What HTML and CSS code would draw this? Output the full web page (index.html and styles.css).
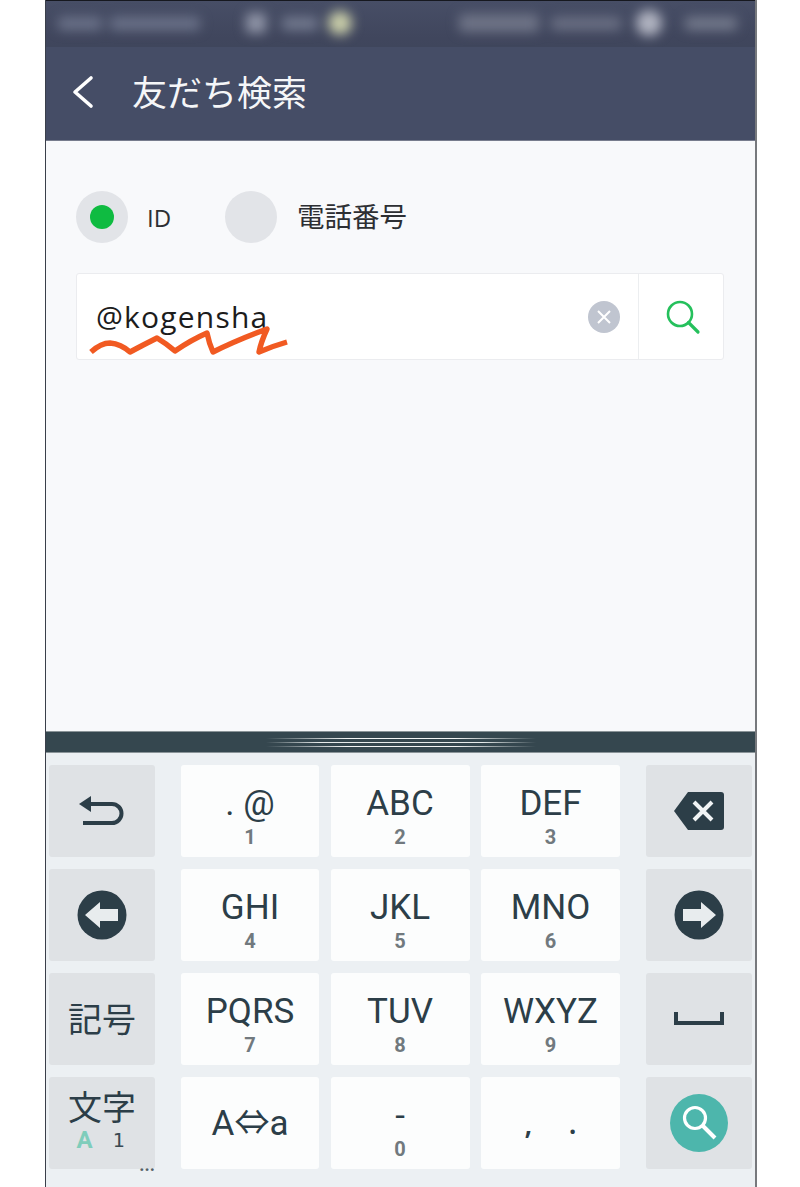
FILE: index.html
```html
<!DOCTYPE html>
<html lang="ja">
<head>
<meta charset="utf-8">
<title>友だち検索</title>
<link rel="stylesheet" href="styles.css">
</head>
<body>
<div class="phone">
  <div class="status">
    <div class="status-clip">
      <span class="b b1"></span><span class="b b2"></span><span class="b b3"></span><span class="b b4"></span><span class="b b5"></span>
      <span class="spacer"></span>
      <span class="b b6"></span><span class="b b7"></span><span class="b b8"></span><span class="b b9"></span>
    </div>
  </div>
  <header class="header">
    <svg class="back" width="24" height="34" viewBox="0 0 24 34"><path d="M20 3 L4 17 L20 31" fill="none" stroke="#fff" stroke-width="3.6" stroke-linecap="round" stroke-linejoin="round"/></svg>
    <h1 class="title">友だち検索</h1>
  </header>
  <main class="body">
    <div class="radios">
      <div class="radio"><span class="dot on"></span><span class="radio-label id">ID</span></div>
      <div class="radio"><span class="dot"></span><span class="radio-label">電話番号</span></div>
    </div>
    <div class="field">
      <span class="field-text">@kogensha</span>
      <svg class="clear" width="32" height="32" viewBox="0 0 32 32"><circle cx="16" cy="16" r="16" fill="#c0c5d0"/><path d="M10 10 L22 22 M22 10 L10 22" stroke="#fff" stroke-width="2"/></svg>
      <div class="field-btn">
        <svg width="36" height="36" viewBox="0 0 36 36"><circle cx="15" cy="15" r="12" fill="none" stroke="#25c05c" stroke-width="2.6"/><path d="M23.5 23.5 L33 33" stroke="#25c05c" stroke-width="3.2" stroke-linecap="round"/></svg>
      </div>
      <svg class="squiggle" width="210" height="40" viewBox="0 0 210 40"><path d="M14 34 Q24 25 33 25 Q44 26 53 34 Q66 27 80 20 Q90 26 98 33 Q114 22 130 15 Q132 25 136 34 Q160 22 190 11 Q184 24 182 34 Q196 28 210 24" fill="none" stroke="#f15a22" stroke-width="5.4" stroke-linejoin="round"/></svg>
    </div>
  </main>
  <div class="handle"><span class="lines"></span></div>
  <section class="keyboard">
    <div class="side">
      <div class="key fn"><svg width="46" height="34" viewBox="0 0 46 34"><path d="M6 10 H33 A9.500 9.500 0 0 1 33 29 H4" fill="none" stroke="#2c3e48" stroke-width="4"/><path d="M0 10 L12 2 V18 Z" fill="#2c3e48"/></svg></div>
      <div class="key fn"><svg width="50" height="50" viewBox="0 0 50 50"><circle cx="25" cy="25" r="24.500" fill="#2c3e48"/><path d="M8 25 L23 12 V19 H41 V31 H23 V38 Z" fill="#e8ecee"/></svg></div>
      <div class="key fn jp">記号</div>
      <div class="key fn mode">
        <span class="mode-main">文字</span>
        <span class="mode-sub"><b>A</b><i>1</i></span>
        <span class="more">...</span>
      </div>
    </div>
    <div class="grid">
      <div class="key"><span class="main sym">. @</span><span class="num">1</span></div>
      <div class="key"><span class="main">ABC</span><span class="num">2</span></div>
      <div class="key"><span class="main">DEF</span><span class="num">3</span></div>
      <div class="key"><span class="main">GHI</span><span class="num">4</span></div>
      <div class="key"><span class="main">JKL</span><span class="num">5</span></div>
      <div class="key"><span class="main">MNO</span><span class="num">6</span></div>
      <div class="key"><span class="main">PQRS</span><span class="num">7</span></div>
      <div class="key"><span class="main">TUV</span><span class="num">8</span></div>
      <div class="key"><span class="main">WXYZ</span><span class="num">9</span></div>
      <div class="key"><span class="main case">A⇔a</span></div>
      <div class="key"><span class="main">-</span><span class="num">0</span></div>
      <div class="key"><span class="main punct">,&nbsp;&nbsp;&nbsp;&nbsp;&nbsp;.</span></div>
    </div>
    <div class="side">
      <div class="key fn"><svg width="50" height="38" viewBox="0 0 50 38"><path d="M14 0 H47 Q50 0 50 3 V35 Q50 38 47 38 H14 L0 19 Z" fill="#2c3e48"/><path d="M20 10 L38 28 M38 10 L20 28" stroke="#f1f4f5" stroke-width="4"/></svg></div>
      <div class="key fn"><svg width="50" height="50" viewBox="0 0 50 50"><circle cx="25" cy="25" r="24.500" fill="#2c3e48"/><path d="M42 25 L27 12 V19 H9 V31 H27 V38 Z" fill="#e8ecee"/></svg></div>
      <div class="key fn"><svg width="50" height="14" viewBox="0 0 50 14"><path d="M2 0 V11 H48 V0" fill="none" stroke="#2c3e48" stroke-width="4"/></svg></div>
      <div class="key fn"><svg width="58" height="58" viewBox="0 0 58 58"><circle cx="29" cy="29" r="29" fill="#4db6ac"/><circle cx="25" cy="24" r="10.500" fill="none" stroke="#fff" stroke-width="3.200"/><path d="M33 32 L45 44" stroke="#fff" stroke-width="4"/></svg></div>
    </div>
  </section>
</div>
</body>
</html>
```
FILE: styles.css
```css
html, body { margin: 0; padding: 0; background: #fff; }
body { width: 800px; height: 1187px; overflow: hidden; font-family: "Noto Sans", "Noto Sans CJK JP", sans-serif; }

.phone {
  margin-left: 45px;
  width: 712px;
  height: 1187px;
  box-sizing: border-box;
  border-left: 1px solid #3a3f4a;
  border-right: 2px solid #77797d;
  display: flex;
  flex-direction: column;
  background: #f8f9fb;
}

.status { height: 47px; background: linear-gradient(#474e66, #40465d 80%, #3f465c); border-top: 1px solid #16181f; box-sizing: border-box; overflow: hidden; }
.status-clip { display: flex; align-items: center; height: 44px; padding: 0 18px 0 12px; filter: blur(6px); }
.spacer { flex: 1; }
.b { display: block; height: 13px; margin-right: 8px; background: #7a8094; border-radius: 4px; }
.b1 { width: 44px; background: #6b7289; }
.b2 { width: 90px; margin-right: 46px; background: #6b7289; }
.b3 { width: 20px; height: 20px; background: #8f94a6; }
.b4 { width: 36px; background: #737a8f; margin-left: 8px; }
.b5 { width: 24px; height: 24px; background: #c8cca8; border-radius: 50%; margin-left: 2px; }
.b6 { width: 80px; height: 18px; background: #6e7386; margin-right: 12px; }
.b7 { width: 70px; background: #6b7084; margin-right: 15px; }
.b8 { width: 26px; height: 26px; background: #b0b3c0; border-radius: 50%; margin-right: 23px; }
.b9 { width: 52px; background: #747a8c; margin-right: 0; }

.header {
  height: 94px;
  background: #454d66;
  border-bottom: 1px solid #777c8d;
  box-sizing: border-box;
  display: flex;
  align-items: center;
  padding: 0 0 4px 25px;
  gap: 37px;
}
.back { flex: none; }
.title { margin: 0 0 2px; font-size: 35px; font-weight: 400; color: #f5f6f8; line-height: 1; font-family: "Noto Sans CJK JP", sans-serif; }

.body { height: 590px; box-sizing: border-box; padding: 50px 31px 0 30px; background: #f8f9fb; }
.radios { display: flex; align-items: center; gap: 45px; height: 52px; }
.radio { display: flex; align-items: center; gap: 20px; }
.dot { width: 52px; height: 52px; border-radius: 50%; background: #e2e4e8; display: flex; align-items: center; justify-content: center; }
.dot.on::after { content: ""; width: 24px; height: 24px; border-radius: 50%; background: #0fbb41; }
.radio-label { font-size: 27.500px; color: #2d2f33; font-weight: 400; font-family: "Noto Sans CJK JP", sans-serif; position: relative; top: -2px; }
.radio-label.id { font-family: "Open Sans", sans-serif; font-size: 24px; width: 33px; margin-left: -1px; top: 0; }

.field {
  position: relative;
  margin-top: 30px;
  height: 87px;
  box-sizing: border-box;
  background: #fff;
  border: 1px solid #ebecef;
  border-radius: 3px;
  display: flex;
  align-items: center;
  padding-left: 19px;
}
.field-text { flex: 1; font-size: 30px; letter-spacing: 1.200px; color: #1c1c1c; font-family: "Open Sans", sans-serif; }
.clear { flex: none; margin-right: 18px; }
.field-btn { flex: none; width: 85px; height: 100%; border-left: 1px solid #eceef0; box-sizing: border-box; display: flex; align-items: center; justify-content: center; padding-left: 3px; }
.squiggle { position: absolute; left: 0; top: 44px; overflow: visible; }

.handle { height: 22px; background: #35474f; border-top: 1px solid #8a9498; border-bottom: 1px solid #8a9498; box-sizing: border-box; display: flex; align-items: center; justify-content: center; }
.lines { width: 270px; height: 9px; background:
  linear-gradient(90deg, transparent, #f4f6f6 30%, #f4f6f6 70%, transparent) 0 0/100% 1px no-repeat,
  linear-gradient(90deg, transparent, #e8ecec 20%, #e8ecec 80%, transparent) 0 4px/100% 1px no-repeat,
  linear-gradient(90deg, transparent, #f4f6f6 30%, #f4f6f6 70%, transparent) 0 8px/100% 1px no-repeat;
}

.keyboard { flex: 1; background: #ecf0f3; display: flex; padding: 12px 3px 0 3px; color: #2c3e48; font-family: Roboto, "Noto Sans CJK JP", sans-serif; }
.side { width: 106px; flex: none; display: flex; flex-direction: column; gap: 12px; }
.grid { width: 439px; margin: 0 26px; display: grid; grid-template-columns: 138px 139px 139px; column-gap: 11.500px; row-gap: 12px; grid-auto-rows: 92px; align-content: start; }

.key { height: 92px; background: #fcfdfd; border-radius: 3px; display: flex; flex-direction: column; align-items: center; justify-content: center; position: relative; }
.key.fn { background: #dfe2e5; }
.main { font-size: 35px; line-height: 38px; font-weight: 400; margin-top: 10px; }
.main.case { margin-top: 2px; }
.main.punct { font-family: "Noto Sans", sans-serif; font-size: 28px; margin-top: 0; font-weight: 600; }
.num { font-size: 20px; line-height: 22px; font-weight: 700; color: #71797e; margin-top: 3px; }

.jp { font-size: 34px; font-family: "Noto Sans CJK JP", sans-serif; box-sizing: border-box; padding-bottom: 4px; }
.mode { font-family: "Noto Sans CJK JP", sans-serif; }
.mode-main { font-size: 34px; line-height: 36px; margin-top: -6px; }
.mode-sub { display: flex; gap: 20px; font-size: 22px; line-height: 26px; margin-top: 3px; margin-right: 3px; }
.mode-sub b { color: #7fcdbb; font-family: Roboto, sans-serif; font-weight: 700; font-size: 24px; }
.mode-sub i { font-style: normal; font-family: "DejaVu Sans Mono", monospace; font-size: 20px; color: #3a4a52; }
.more { position: absolute; right: 0; bottom: -1px; font-size: 18px; line-height: 10px; font-weight: 700; color: #555f66; font-family: Roboto, sans-serif; }
```
